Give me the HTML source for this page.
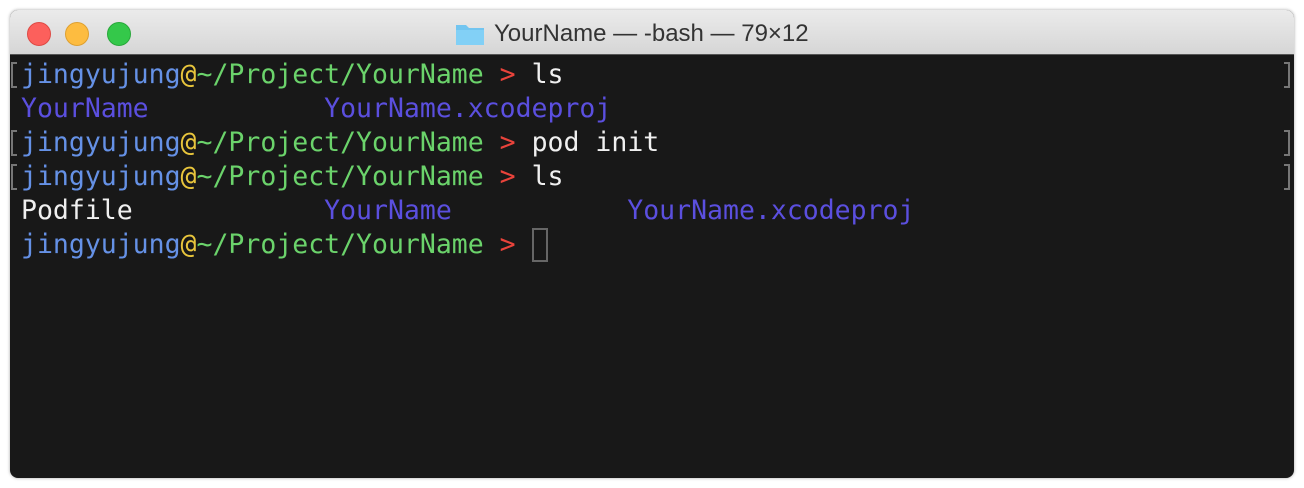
<!DOCTYPE html>
<html><head><meta charset="utf-8"><style>
html,body{margin:0;padding:0;width:1304px;height:488px;background:#fff;overflow:hidden}
.win{position:absolute;left:10px;top:10px;width:1284px;height:468px;border-radius:8px;overflow:hidden;box-shadow:0 0 3px rgba(0,0,0,.35);background:#181818}
.tb{position:absolute;left:0;top:0;width:100%;height:44px;background:linear-gradient(#ebebeb,#d6d6d6);border-bottom:1px solid #555}
.dot{position:absolute;top:12px;width:22px;height:22px;border-radius:50%}
.title{position:absolute;left:484px;top:10px;font:24px "Liberation Sans",sans-serif;color:#333;white-space:nowrap}
.term{position:absolute;left:0;top:45px;right:0;bottom:0}
.l{position:absolute;left:11px;font:26.5px/34px "DejaVu Sans Mono","Liberation Mono",monospace;white-space:pre;color:#f0f0f0}
.u{color:#6591e6}.a{color:#e8c53c}.p{color:#6bd36b}.r{color:#e9433b}.d{color:#5b4fdf}
.bl,.br{position:absolute;width:4px;height:22px;border:2px solid #777}
.bl{left:1px;border-right:none}.br{left:1274px;border-left:none}
</style></head><body>
<div class="win">
<div class="tb">
<div class="dot" style="left:17px;background:#fc605c;border:0.5px solid #de4a44"></div>
<div class="dot" style="left:55px;background:#fdbc40;border:0.5px solid #dea030"></div>
<div class="dot" style="left:97px;background:#34c84a;border:0.5px solid #28a83a"></div>
<svg style="position:absolute;left:445px;top:12px" width="30" height="24" viewBox="0 0 30 24"><path d="M1 3h10l3 3h15v17H1z" fill="#72c5f0"/><path d="M1 8h28v15H1z" fill="#82d0f6"/></svg>
<div class="title">YourName — -bash — 79×12</div>
</div>
<div class="term">
<div class="l" style="top:3px"><span class="u">jingyujung</span><span class="a">@</span><span class="p">~/Project/YourName</span> <span class="r">&gt;</span> ls</div>
<div class="l" style="top:37px"><span class="d">YourName           YourName.xcodeproj</span></div>
<div class="l" style="top:71px"><span class="u">jingyujung</span><span class="a">@</span><span class="p">~/Project/YourName</span> <span class="r">&gt;</span> pod init</div>
<div class="l" style="top:105px"><span class="u">jingyujung</span><span class="a">@</span><span class="p">~/Project/YourName</span> <span class="r">&gt;</span> ls</div>
<div class="l" style="top:139px">Podfile            <span class="d">YourName           YourName.xcodeproj</span></div>
<div class="l" style="top:173px"><span class="u">jingyujung</span><span class="a">@</span><span class="p">~/Project/YourName</span> <span class="r">&gt;</span> </div>
<div style="position:absolute;left:522px;top:173px;width:12px;height:30px;border:2px solid #666"></div>
<div class="bl" style="top:7px"></div><div class="br" style="top:7px"></div>
<div class="bl" style="top:75px"></div><div class="br" style="top:75px"></div>
<div class="bl" style="top:109px"></div><div class="br" style="top:109px"></div>
</div>
</div>
</body></html>
